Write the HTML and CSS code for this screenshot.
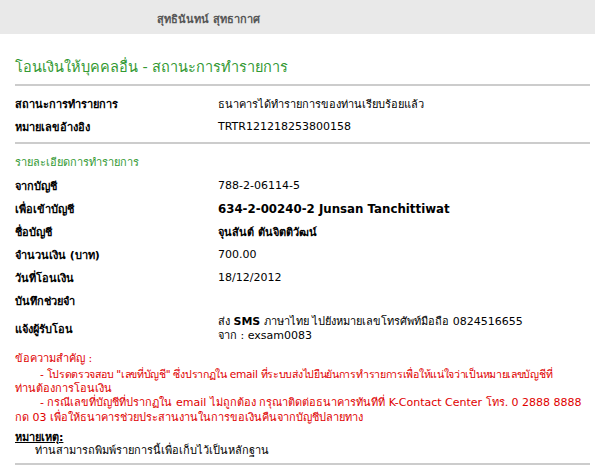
FILE: index.html
```html
<!DOCTYPE html>
<html lang="th">
<head>
<meta charset="utf-8">
<title>โอนเงินให้บุคคลอื่น - สถานะการทำรายการ</title>
<link rel="stylesheet" href="styles.css">
</head>
<body>
<div class="header"><span class="user">สุทธินันทน์ สุทธากาศ</span></div>
<div class="main">
  <h1 class="title">โอนเงินให้บุคคลอื่น - สถานะการทำรายการ</h1>
  <div class="rule"></div>
  <div class="rows first">
    <div class="row"><div class="label">สถานะการทำรายการ</div><div class="value">ธนาคารได้ทำรายการของท่านเรียบร้อยแล้ว</div></div>
    <div class="row"><div class="label">หมายเลขอ้างอิง</div><div class="value">TRTR121218253800158</div></div>
  </div>
  <div class="rule"></div>
  <div class="section">รายละเอียดการทำรายการ</div>
  <div class="rows">
    <div class="row"><div class="label">จากบัญชี</div><div class="value">788-2-06114-5</div></div>
    <div class="row"><div class="label">เพื่อเข้าบัญชี</div><div class="value strong">634-2-00240-2 Junsan Tanchittiwat</div></div>
    <div class="row"><div class="label">ชื่อบัญชี</div><div class="value bold">จุนสันต์ ตันจิตติวัฒน์</div></div>
    <div class="row"><div class="label">จำนวนเงิน (บาท)</div><div class="value">700.00</div></div>
    <div class="row"><div class="label">วันที่โอนเงิน</div><div class="value">18/12/2012</div></div>
    <div class="row"><div class="label">บันทึกช่วยจำ</div><div class="value"></div></div>
    <div class="row multi"><div class="label">แจ้งผู้รับโอน</div><div class="value lines">ส่ง <b>SMS</b> ภาษาไทย ไปยังหมายเลขโทรศัพท์มือถือ 0824516655<br>จาก : exsam0083</div></div>
  </div>
  <div class="notice">
    <div>ข้อความสำคัญ :</div>
    <div class="line indent tight">- โปรดตรวจสอบ "เลขที่บัญชี" ซึ่งปรากฏใน email ที่ระบบส่งไปยืนยันการทำรายการเพื่อให้แน่ใจว่าเป็นหมายเลขบัญชีที่</div>
    <div class="line">ท่านต้องการโอนเงิน</div>
    <div class="line indent">- กรณีเลขที่บัญชีที่ปรากฏใน email ไม่ถูกต้อง กรุณาติดต่อธนาคารทันทีที่ K-Contact Center โทร. 0 2888 8888</div>
    <div class="line">กด 03 เพื่อให้ธนาคารช่วยประสานงานในการขอเงินคืนจากบัญชีปลายทาง</div>
  </div>
  <div class="remark">
    <div class="remark-title">หมายเหตุ:</div>
    <div class="remark-text">ท่านสามารถพิมพ์รายการนี้เพื่อเก็บไว้เป็นหลักฐาน</div>
  </div>
  <div class="rule"></div>
</div>
</body>
</html>
```
FILE: styles.css
```css
html, body {
  margin: 0;
  padding: 0;
  background: #ffffff;
}
body {
  font-family: "DejaVu Sans", Verdana, Tahoma, sans-serif;
  font-size: 11px;
  color: #000000;
}
.header {
  height: 34px;
  box-sizing: border-box;
  background: #e9e9e9;
  padding: 4px 0 0 157px;
  display: flex;
  align-items: center;
}
.user {
  font-size: 11px;
  font-weight: bold;
  color: #555555;
}
.main {
  padding: 0 5px 0 15px;
}
.title {
  margin: 23px 0 7px;
  font-size: 14.5px;
  line-height: 20px;
  font-weight: normal;
  color: #339933;
}
.rule {
  height: 2px;
  background: #cccccc;
}
.rows.first {
  padding: 6px 0 4px;
}
.row {
  display: flex;
  align-items: center;
  min-height: 23px;
}
.label {
  width: 203px;
  flex: none;
  font-weight: bold;
}
.value.strong {
  font-weight: bold;
  font-size: 11.8px;
}
.value.bold {
  font-weight: bold;
}
.row.multi {
  padding: 3px 0 4px;
}
.lines {
  line-height: 14px;
}
.section {
  margin-top: 7px;
  line-height: 23px;
  color: #339933;
}
.notice {
  margin-top: 5px;
  color: #e00000;
  line-height: 14.8px;
}
.notice .line {
  white-space: nowrap;
}
.notice .indent {
  padding-left: 25px;
}
.notice .tight {
  font-size: 10.6px;
  letter-spacing: -0.3px;
}
.remark {
  margin-top: 5px;
  line-height: 14px;
}
.remark-title {
  font-weight: bold;
  text-decoration: underline;
  line-height: 13px;
}
.remark-text {
  padding-left: 20px;
  padding-bottom: 5px;
}
```
